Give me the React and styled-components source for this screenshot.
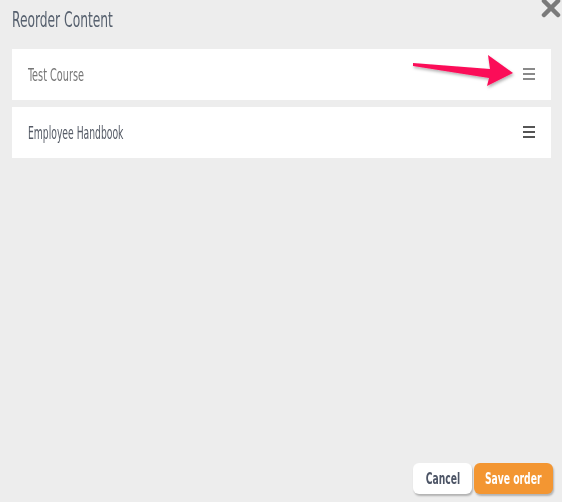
import React from "react"
import styled, { createGlobalStyle } from "styled-components"

const GlobalStyle = createGlobalStyle`
  html, body {
    margin: 0;
    padding: 0;
    background: #ededed;
  }
  body {
    font-family: "DejaVu Sans Condensed", "Liberation Sans", sans-serif;
  }
`

// the reference font is a tall condensed face; squeeze DejaVu Condensed to match
const Narrow = styled.span`
  display: inline-block;
  flex-shrink: 0;
  white-space: nowrap;
  transform: scaleX(${(p) => p.$x || 0.6});
  transform-origin: ${(p) => (p.$center ? "center" : "left")} center;
`

const Modal = styled.div`
  position: relative;
  width: 562px;
  height: 502px;
  box-sizing: border-box;
  padding: 7px 11px 8px 12px;
  display: flex;
  flex-direction: column;
  background: #ededed;
`

const Title = styled.h2`
  margin: 0;
  font-weight: normal;
  font-size: 22px;
  line-height: 26px;
  color: #56606e;
`

const CloseButton = styled.button`
  position: absolute;
  top: -5px;
  right: -2px;
  width: 26px;
  height: 26px;
  padding: 0;
  border: 0;
  background: none;
  cursor: pointer;
`

const List = styled.div`
  margin-top: 16px;
  display: flex;
  flex-direction: column;
  gap: 7px;
`

const Row = styled.div`
  height: 51px;
  background: #fff;
  display: flex;
  align-items: center;
  justify-content: space-between;
  padding: 0 16px 0 16px;
  box-sizing: border-box;
`

const RowLabel = styled.span`
  font-size: 18px;
  line-height: 22px;
  color: ${(p) => (p.$muted ? "#767676" : "#555b66")};
  width: 120px;
`

const Handle = styled.span`
  display: flex;
  flex-direction: column;
  gap: 3px;
  width: 12px;
  margin-top: -1px;
  & i {
    display: block;
    height: 2px;
    background: ${(p) => (p.$muted ? "#8a8a8a" : "#555")};
  }
`

const Spacer = styled.div`
  flex: 1;
`

const Footer = styled.div`
  display: flex;
  justify-content: flex-end;
  gap: 2px;
  margin-right: -2px;
`

const Button = styled.button`
  width: ${(p) => (p.$primary ? "79px" : "59px")};
  height: 31px;
  display: flex;
  align-items: center;
  justify-content: center;
  border: 0;
  border-radius: 6px;
  padding: 0;
  font-family: inherit;
  font-size: 16px;
  font-weight: bold;
  box-shadow: 1px 2px 2px rgba(0, 0, 0, 0.25);
  background: ${(p) => (p.$primary ? "#f39632" : "#fff")};
  color: ${(p) => (p.$primary ? "#fff" : "#4d5566")};
`

const Arrow = styled.svg`
  position: absolute;
  left: 410px;
  top: 50px;
  overflow: visible;
`

const items = [
  { label: "Test Course", muted: true },
  { label: "Employee Handbook" },
]

export default function App() {
  return (
    <>
      <GlobalStyle />
      <Modal>
        <Title>
          <Narrow $x={0.62}>Reorder Content</Narrow>
        </Title>
        <CloseButton aria-label="close">
          <svg width="26" height="26" viewBox="0 0 26 26">
            <path d="M6 6 L20 20 M20 6 L6 20" stroke="#7a7a7a" strokeWidth="4.5" strokeLinecap="round" />
          </svg>
        </CloseButton>
        <List>
          {items.map((it) => (
            <Row key={it.label}>
              <RowLabel $muted={it.muted}>
                <Narrow $x={it.muted ? 0.6 : 0.57}>{it.label}</Narrow>
              </RowLabel>
              <Handle $muted={it.muted}>
                <i />
                <i />
                <i />
              </Handle>
            </Row>
          ))}
        </List>
        <Spacer />
        <Footer>
          <Button>
            <Narrow $x={0.64} $center>Cancel</Narrow>
          </Button>
          <Button $primary>
            <Narrow $x={0.64} $center>Save order</Narrow>
          </Button>
        </Footer>
        <Arrow width="110" height="40" viewBox="0 0 110 40">
          <defs>
            <filter id="sh" x="-20%" y="-50%" width="140%" height="200%">
              <feDropShadow dx="1" dy="2" stdDeviation="1.5" floodColor="#000" floodOpacity="0.3" />
            </filter>
          </defs>
          <polygon
            points="3,13 3,16 79,28 77,36 103,23 78,5 80,19"
            fill="#fb0c58"
            filter="url(#sh)"
          />
        </Arrow>
      </Modal>
    </>
  )
}
